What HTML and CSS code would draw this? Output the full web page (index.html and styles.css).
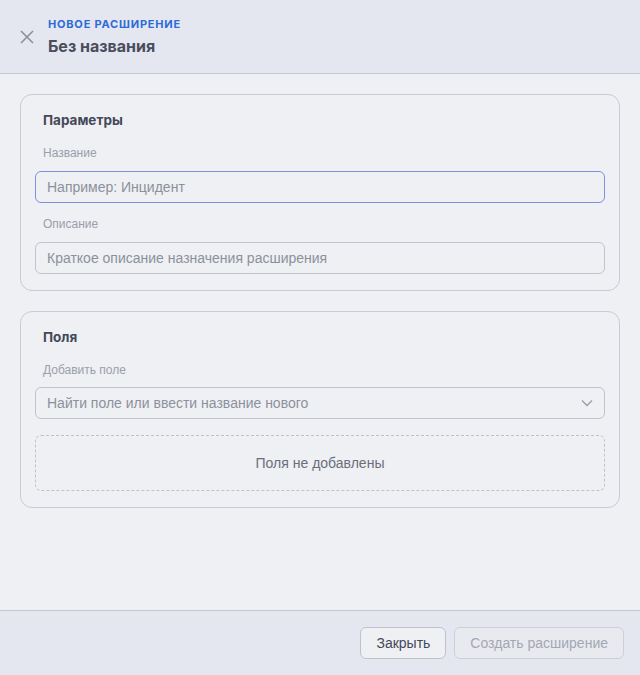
FILE: index.html
```html
<!DOCTYPE html>
<html lang="ru">

<head>
    <meta charset="UTF-8">
    <meta name="viewport" content="width=device-width, initial-scale=1.0">
    <title>Новое расширение</title>
    <link rel="stylesheet" href="styles.css">
</head>

<body>

    <div class="dialog">
        <!-- Header -->
        <div class="dialog-header">
            <button class="close-btn" type="button" aria-label="Закрыть">
                <svg width="14" height="14" viewBox="0 0 14 14">
                    <path d="M1 1 L13 13 M13 1 L1 13" stroke="#8a8d98" stroke-width="1.5" fill="none" />
                </svg>
            </button>
            <div class="header-text">
                <div class="eyebrow">Новое расширение</div>
                <div class="header-title">Без названия</div>
            </div>
        </div>

        <!-- Body -->
        <div class="dialog-body">
            <div class="card">
                <h3 class="card-title">Параметры</h3>
                <label class="field-label" for="name">Название</label>
                <input class="field-input focused" type="text" id="name" placeholder="Например: Инцидент">
                <label class="field-label next" for="desc">Описание</label>
                <input class="field-input" type="text" id="desc" placeholder="Краткое описание назначения расширения">
            </div>

            <div class="card">
                <h3 class="card-title">Поля</h3>
                <label class="field-label" for="field">Добавить поле</label>
                <div class="select-box">
                    <input class="field-input" type="text" id="field" placeholder="Найти поле или ввести название нового">
                    <svg class="chevron" width="12" height="8" viewBox="0 0 12 8">
                        <path d="M1 1.5 L6 6.5 L11 1.5" stroke="#9a9da8" stroke-width="1.3" fill="none" />
                    </svg>
                </div>
                <div class="empty-box">Поля не добавлены</div>
            </div>
        </div>

        <!-- Footer -->
        <div class="dialog-footer">
            <button class="btn" type="button">Закрыть</button>
            <button class="btn" type="button" disabled>Создать расширение</button>
        </div>
    </div>

</body>

</html>
```

FILE: styles.css
```css
body {
  margin: 0;
  font-family: "Liberation Sans", Arial, sans-serif;
  background-color: #eef0f4;
  color: #454858;
}
.dialog {
  display: flex;
  flex-direction: column;
  height: 675px;
}
.dialog-header {
  display: flex;
  align-items: center;
  gap: 13px;
  height: 74px;
  padding: 0 20px;
  box-sizing: border-box;
  background-color: #e4e7ef;
  border-bottom: 1px solid #c6c9d3;
  flex-shrink: 0;
}
.close-btn {
  background: none;
  border: none;
  padding: 0;
  width: 15px;
  height: 14px;
  display: flex;
  cursor: pointer;
}
.header-text {
  display: flex;
  flex-direction: column;
}
.eyebrow {
  font-family: Inter, "Liberation Sans", sans-serif;
  font-size: 11px;
  font-weight: 700;
  letter-spacing: 0.8px;
  text-transform: uppercase;
  color: #2d6bd8;
  line-height: 14px;
}
.header-title {
  font-family: Inter, "Liberation Sans", sans-serif;
  font-size: 16px;
  font-weight: 700;
  color: #4a4d5e;
  line-height: 20px;
  margin-top: 5px;
}
.dialog-body {
  flex: 1;
  padding: 20px;
  display: flex;
  flex-direction: column;
  gap: 20px;
}
.card {
  display: flex;
  flex-direction: column;
  border: 1px solid #c8cbd3;
  border-radius: 12px;
  padding: 15px 14px 16px;
}
.card-title {
  margin: 0 0 15px;
  padding: 0 8px;
  font-family: Inter, "Liberation Sans", sans-serif;
  font-size: 13.5px;
  font-weight: 700;
  line-height: 20px;
  color: #454858;
}
.field-label {
  display: block;
  padding: 0 8px;
  font-size: 12px;
  line-height: 16px;
  color: #9b9eab;
  margin-bottom: 10px;
}
.field-label.next {
  margin-top: 13px;
}
.field-input {
  box-sizing: border-box;
  width: 100%;
  height: 32px;
  padding: 0 11px;
  border: 1px solid #c0c3cc;
  border-radius: 6px;
  background-color: transparent;
  font-family: "Liberation Sans", Arial, sans-serif;
  font-size: 14px;
  color: #454858;
  outline: none;
}
.field-input::placeholder {
  color: #8d909b;
}
.field-input.focused {
  border-color: #7f8fdc;
}
.select-box {
  position: relative;
  margin-top: -1px;
}
.chevron {
  position: absolute;
  right: 12px;
  top: 12px;
}
.empty-box {
  margin-top: 16px;
  height: 56px;
  box-sizing: border-box;
  border: 1px dashed #bfc2cb;
  border-radius: 6px;
  display: flex;
  align-items: center;
  justify-content: center;
  font-size: 14px;
  color: #6b6e7a;
}
.dialog-footer {
  flex-shrink: 0;
  height: 65px;
  box-sizing: border-box;
  border-top: 1px solid #c3c6d1;
  background-color: #e4e7ef;
  display: flex;
  justify-content: flex-end;
  align-items: flex-start;
  gap: 8px;
  padding: 16px 16px 0;
}
.btn {
  height: 32px;
  padding: 0 15px;
  border: 1px solid #c0c3cc;
  border-radius: 6px;
  background-color: #eef0f4;
  font-family: "Liberation Sans", Arial, sans-serif;
  font-size: 14px;
  color: #454858;
  cursor: pointer;
}
.btn:disabled {
  color: #a4a7b2;
  border-color: #cdd0d8;
  background-color: #e8eaf0;
  cursor: default;
}
```
